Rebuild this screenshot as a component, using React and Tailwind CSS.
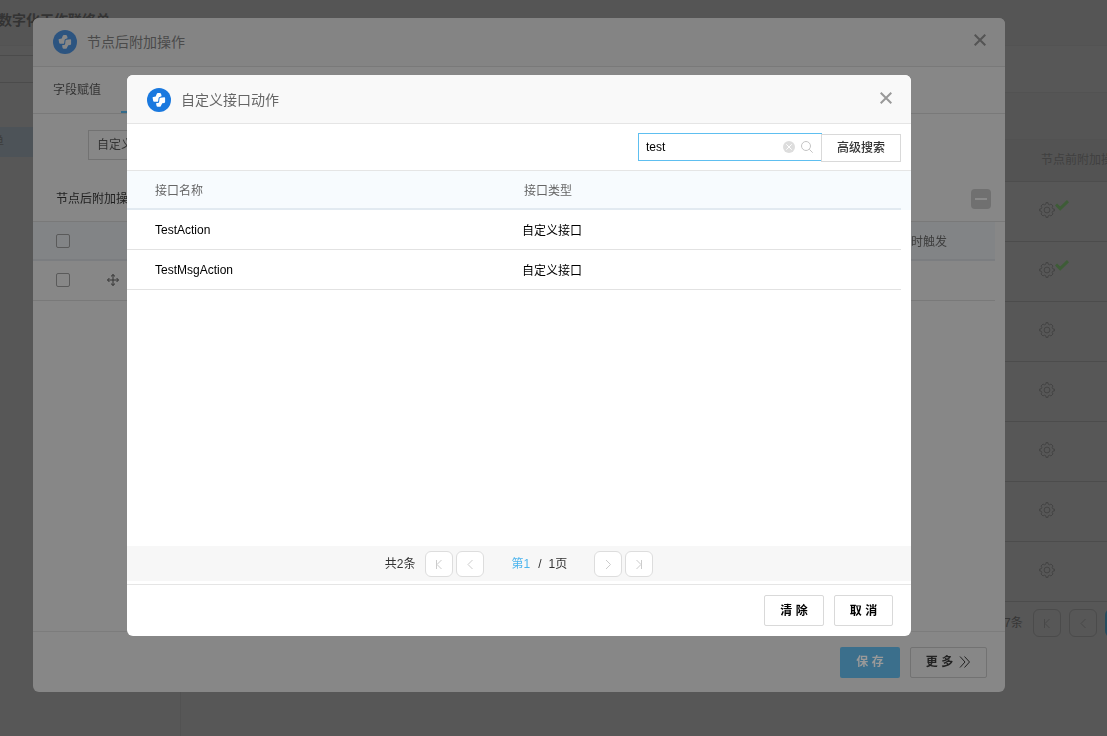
// App.jsx

// Imports
import { useState } from 'react';

const interfaces = [
    { name: 'TestAction', type: '自定义接口' },
    { name: 'TestMsgAction', type: '自定义接口' },
];

const nodes = [
    { id: 1, configured: true },
    { id: 2, configured: true },
    { id: 3, configured: false },
    { id: 4, configured: false },
    { id: 5, configured: false },
    { id: 6, configured: false },
    { id: 7, configured: false },
];

// Icons
const Logo = ({ className }) => (
    <svg viewBox="0 0 24 24" className={`h-6 w-6 shrink-0 ${className}`} aria-hidden="true">
        <circle cx="12" cy="12" r="12" fill="currentColor" />
        <path d="M9.8 5.7 Q10.1 5 10.9 5 H12.9 Q13.7 5 14 5.8 L14.5 7.6 Q14.7 8.4 13.9 8.6 L12.6 8.9 Q11.7 9.1 11.6 10 L11.2 12.9 Q11.1 13.8 10.2 13.8 H7.2 Q6.4 13.8 6.2 13 L5.6 9.8 Q5.5 9 6.3 8.9 L8.7 8.6 Z" fill="#fff" />
        <path d="M12.5 10.8 Q12.6 9.9 13.5 9.8 L17.2 9.3 Q18.1 9.2 18.1 10 V14 Q18.1 14.8 17.3 14.9 L15.3 15.2 L13.7 18.2 Q13.4 18.8 12.7 18.8 H10.6 Q9.8 18.8 9.6 18 L9.1 15.7 Q9 14.9 9.8 14.9 H11.2 Q12 14.9 12.1 14.1 Z" fill="#fff" />
    </svg>
);

const CloseIcon = () => (
    <svg viewBox="0 0 12 12" className="h-3 w-3" fill="none" stroke="currentColor" strokeWidth="2" aria-hidden="true">
        <path d="M.7.7l10.6 10.6M11.3.7L.7 11.3" />
    </svg>
);

const GearIcon = () => (
    <svg viewBox="0 0 16 16" className="h-4 w-4" fill="none" stroke="currentColor" strokeLinejoin="round" aria-hidden="true">
        <path d="M7 .6 H9 V2 L10.6 2.8 L12 2 L14 4 L13.2 5.4 L14 7 H15.4 V9 H14 L13.2 10.6 L14 12 L12 14 L10.6 13.2 L9 14 V15.4 H7 V14 L5.4 13.2 L4 14 L2 12 L2.8 10.6 L2 9 H.6 V7 H2 L2.8 5.4 L2 4 L4 2 L5.4 2.8 L7 2 Z" />
        <circle cx="8" cy="8" r="2.9" />
    </svg>
);

const CheckIcon = () => (
    <svg viewBox="0 0 14 11" className="h-[11px] w-[14px]" fill="none" stroke="currentColor" strokeWidth="3" aria-hidden="true">
        <path d="M1 4.5 L5.2 8.6 L13 1.2" />
    </svg>
);

const MoveIcon = () => (
    <svg viewBox="0 0 12 12" className="h-3 w-3" fill="none" stroke="currentColor" aria-hidden="true">
        <path d="M6 .6v10.8M.6 6h10.8M4 2.4L6 .5l2 1.9M4 9.6l2 1.9 2-1.9M2.4 4L.5 6l1.9 2M9.6 4l1.9 2-1.9 2" />
    </svg>
);

const SearchIcon = () => (
    <svg viewBox="0 0 12 12" className="h-3 w-3" fill="none" stroke="currentColor" aria-hidden="true">
        <circle cx="5" cy="5" r="4.5" />
        <path d="M8.3 8.3l3.4 3.4" />
    </svg>
);

const ClearIcon = () => (
    <svg viewBox="0 0 12 12" className="h-3 w-3" aria-hidden="true">
        <circle cx="6" cy="6" r="6" fill="currentColor" />
        <path d="M3.3 3.3l5.4 5.4M8.7 3.3L3.3 8.7" stroke="#fff" />
    </svg>
);

const arrows = {
    first: 'M2.5 2v9M7.5 2L3 6.5l4.5 4.5',
    prev: 'M7.5 2L3 6.5l4.5 4.5',
    next: 'M3 2l4.5 4.5L3 11',
    last: 'M7.5 2v9M2.5 2L7 6.5 2.5 11',
};

const PageButton = ({ kind, label, className }) => (
    <button type="button" aria-label={label} className={`flex shrink-0 items-center justify-center border ${className}`}>
        <svg viewBox="0 0 10 12" className="h-3 w-[10px]" fill="none" stroke="currentColor" aria-hidden="true">
            <path d={arrows[kind]} />
        </svg>
    </button>
);

const DialogHeader = ({ title, id, className, logoClass, titleClass }) => (
    <header className={`flex h-[49px] shrink-0 items-center border-b px-5 ${className}`}>
        <Logo className={logoClass} />
        <h2 id={id} className={`ml-[10px] flex-1 text-sm ${titleClass}`}>{title}</h2>
        <button type="button" aria-label="关闭" className="-mt-1 -mr-[7px] p-[6px]">
            <CloseIcon />
        </button>
    </header>
);

// Workflow page underneath the dialogs
const WorkflowPage = () => (
    <div className="flex h-screen flex-col overflow-hidden bg-[#575757] text-xs text-[#404040]">
        <header className="h-[46px] shrink-0 border-b border-[#535353] bg-[#555555]">
            <h1 className="-ml-[2px] pt-[10px] text-sm leading-5 font-bold whitespace-nowrap text-[#333333]">数字化工作联络单</h1>
        </header>
        <div className="flex min-h-0 flex-1">
            <aside className="w-[181px] shrink-0 border-r border-[#525252]">
                <div className="mt-[9px] h-7 border-y border-[#4b4b4b]" />
                <a href="#form" className="mt-11 block h-[30px] overflow-hidden bg-[#4d5358] text-[#3c3c3c]">
                    <span className="-ml-2 block leading-[30px]">单</span>
                </a>
            </aside>
            <main className="min-w-0 flex-1">
                <div className="h-[47px] border-b border-[#525252]" />
                <div className="h-[47px] border-b border-[#525252] bg-[#555555]" />
                <table className="w-full table-fixed text-left">
                    <thead className="bg-[#535353]">
                        <tr className="h-[41px] border-b border-[#4d4d4d]">
                            <th className="pl-[860px] font-normal whitespace-nowrap">节点前附加操作</th>
                        </tr>
                    </thead>
                    <tbody>
                        {nodes.map((node) => (
                            <tr key={node.id} className="h-[60px] border-b border-[#4c4c4c]">
                                <td className="pb-[3px] pl-[858px]">
                                    <div className="flex h-4 items-start text-[#444444]">
                                        <GearIcon />
                                        {node.configured && (
                                            <span className="-mt-[2px] text-[#3e5c37]"><CheckIcon /></span>
                                        )}
                                    </div>
                                </td>
                            </tr>
                        ))}
                    </tbody>
                </table>
                <div className="flex items-center pt-[7px] pl-[823px]">
                    <span className="w-[29px] shrink-0 whitespace-nowrap text-[#363636]">7条</span>
                    <PageButton kind="first" label="首页" className="h-7 w-7 rounded-md border-[#4b4b4b] text-[#484848]" />
                    <PageButton kind="prev" label="上一页" className="ml-2 h-7 w-7 rounded-md border-[#4b4b4b] text-[#484848]" />
                    <span className="ml-2 h-7 w-7 shrink-0 rounded-md bg-[#264c5e]" />
                </div>
            </main>
        </div>
    </div>
);

// Dialog that lists the operations attached to a node
const NodeActionDialog = () => (
    <div className="fixed inset-0 flex pt-[18px] pr-[102px] pb-11 pl-[33px] text-xs text-[#343434]">
        <section role="dialog" aria-labelledby="node-title" className="flex min-w-0 flex-1 flex-col overflow-hidden rounded-md bg-[#878787]">
            <DialogHeader
                id="node-title"
                title="节点后附加操作"
                className="border-[#797979] bg-[#848484] text-[#545454]"
                logoClass="text-[#2c5480] [&_path]:fill-[#878787]"
                titleClass="text-[#4a4a4a]"
            />
            <nav className="flex h-[47px] shrink-0 items-stretch border-b border-[#797979] pl-5">
                <a href="#field" className="flex items-center">字段赋值</a>
                <a href="#custom" aria-label="自定义接口" className="ml-5 w-24 border-b-2 border-[#346b8a]" />
            </nav>
            <div className="flex-1">
                <div className="pt-4 pl-[55px]">
                    <button type="button" className="h-[30px] w-40 border border-[#727272] pl-2 text-left">自定义接口动作</button>
                </div>
                <div className="flex h-[61px] items-center justify-between pr-[14px] pl-[23px]">
                    <h3 className="pt-4 text-[#1f1f1f]">节点后附加操作</h3>
                    <button type="button" aria-label="删除" className="mt-4 flex h-5 w-5 items-center justify-center rounded-sm bg-[#707070]">
                        <span className="h-[2px] w-3 bg-[#8a8a8a]" />
                    </button>
                </div>
                <div className="border-t border-[#797979] pr-[10px]">
                    <table className="w-full table-fixed">
                        <thead className="bg-[#828486]">
                            <tr className="h-[38px] border-b-2 border-[#7b7d80]">
                                <th className="w-[60px]">
                                    <input type="checkbox" aria-label="全选" className="ml-[23px] block h-[14px] w-[14px] appearance-none rounded-xs border border-[#5a5a5a]" />
                                </th>
                                <th className="w-10" />
                                <th className="pt-[2px] pr-12 text-right font-normal text-[#3e3e3e]">流转时触发</th>
                            </tr>
                        </thead>
                        <tbody>
                            <tr className="h-10 border-b border-[#797979]">
                                <td>
                                    <input type="checkbox" aria-label="选择" className="ml-[23px] block h-[14px] w-[14px] appearance-none rounded-xs border border-[#5a5a5a]" />
                                </td>
                                <td className="pl-[14px]"><MoveIcon /></td>
                                <td />
                            </tr>
                        </tbody>
                    </table>
                </div>
            </div>
            <footer className="flex h-[61px] shrink-0 items-center justify-end gap-[10px] border-t border-[#7c7c7c] pr-[18px] font-bold">
                <button type="button" className="h-[31px] w-[60px] rounded-xs bg-[#3b6f8c] text-[#999999]">保 存</button>
                <button type="button" className="flex h-[31px] w-[77px] items-center justify-center gap-[6px] rounded-xs border border-[#727272] text-[#222222]">
                    更 多
                    <svg viewBox="0 0 12 12" className="h-3 w-3" fill="none" stroke="currentColor" aria-hidden="true">
                        <path d="M1 .5L6 6l-5 5.5M5.5.5l5 5.5-5 5.5" />
                    </svg>
                </button>
            </footer>
        </section>
    </div>
);

// Picker for a custom interface
const InterfacePicker = () => {
    const [keyword, setKeyword] = useState('test');

    return (
        <div className="fixed inset-0 flex pt-[75px] pr-[196px] pb-[100px] pl-[127px] text-xs text-black">
            <section role="dialog" aria-modal="true" aria-labelledby="picker-title" className="flex min-w-0 flex-1 flex-col overflow-hidden rounded-md bg-white">
                <DialogHeader
                    id="picker-title"
                    title="自定义接口动作"
                    className="border-[#e5e5e5] bg-[#f9f9f9] pt-[2px] text-[#999999]"
                    logoClass="text-[#1a79df]"
                    titleClass="text-[#666666]"
                />

                {/* Search bar */}
                <div className="flex h-[46px] shrink-0 items-center justify-end pr-[10px]">
                    <div className="flex h-7 w-[184px] items-center border border-[#5ebff0] pr-2 pl-[7px]">
                        <input
                            type="text"
                            aria-label="接口名称"
                            value={keyword}
                            onChange={(e) => setKeyword(e.target.value)}
                            className="w-0 flex-1 outline-none"
                        />
                        <button type="button" aria-label="清空" className="text-[#dddddd]" onClick={() => setKeyword('')}>
                            <ClearIcon />
                        </button>
                        <button type="button" aria-label="搜索" className="ml-[6px] text-[#c4c4c4]">
                            <SearchIcon />
                        </button>
                    </div>
                    <button type="button" className="-ml-px mt-px h-7 w-20 border border-[#d9d9d9] font-medium text-[#333333]">高级搜索</button>
                </div>

                {/* Interface list */}
                <div className="min-h-0 flex-1 border-t border-[#e5e5e5]">
                    <div className="bg-[linear-gradient(#f7fbfe_39px,transparent_39px)] pr-[10px]">
                        <table className="w-full table-fixed text-left">
                            <thead>
                                <tr className="h-[38px] border-b-2 border-[#e2eaf1] text-[#666666]">
                                    <th className="w-[369px] pt-[2px] pl-7 font-normal">接口名称</th>
                                    <th className="pt-[2px] pl-7 font-normal">接口类型</th>
                                </tr>
                            </thead>
                            <tbody>
                                {interfaces.map((item) => (
                                    <tr key={item.name} className="h-10 border-b border-[#e2e2e2]">
                                        <td className="pt-[2px] pl-7">{item.name}</td>
                                        <td className="pt-1 pl-[26px]">{item.type}</td>
                                    </tr>
                                ))}
                            </tbody>
                        </table>
                    </div>
                </div>

                {/* Pagination */}
                <div className="mb-[3px] flex h-[35px] shrink-0 items-center justify-center bg-[#f7f7f7] text-[#333333]">
                    <span className="mr-[10px]">共2条</span>
                    <PageButton kind="first" label="首页" className="mr-[3px] h-[26px] w-7 rounded-md border-[#dddddd] bg-white text-[#cccccc]" />
                    <PageButton kind="prev" label="上一页" className="h-[26px] w-7 rounded-md border-[#dddddd] bg-white text-[#cccccc]" />
                    <span className="mr-2 ml-[27px] text-[#4db5ee]">第1</span>
                    <span>/</span>
                    <span className="mr-[27px] ml-[7px]">1页</span>
                    <PageButton kind="next" label="下一页" className="mr-[3px] h-[26px] w-7 rounded-md border-[#dddddd] bg-white text-[#cccccc]" />
                    <PageButton kind="last" label="末页" className="h-[26px] w-7 rounded-md border-[#dddddd] bg-white text-[#cccccc]" />
                </div>

                <footer className="flex h-[52px] shrink-0 items-center justify-end gap-[10px] border-t border-[#e5e5e5] pr-[18px] font-bold">
                    <button type="button" className="h-[31px] w-[60px] rounded-xs border border-[#d9d9d9]">清 除</button>
                    <button type="button" className="h-[31px] w-[59px] rounded-xs border border-[#d9d9d9]">取 消</button>
                </footer>
            </section>
        </div>
    );
};

const App = () => (
    <div className="font-['Liberation_Sans','Noto_Sans_CJK_SC',sans-serif]">
        <WorkflowPage />
        <NodeActionDialog />
        <InterfacePicker />
    </div>
);

export default App;
